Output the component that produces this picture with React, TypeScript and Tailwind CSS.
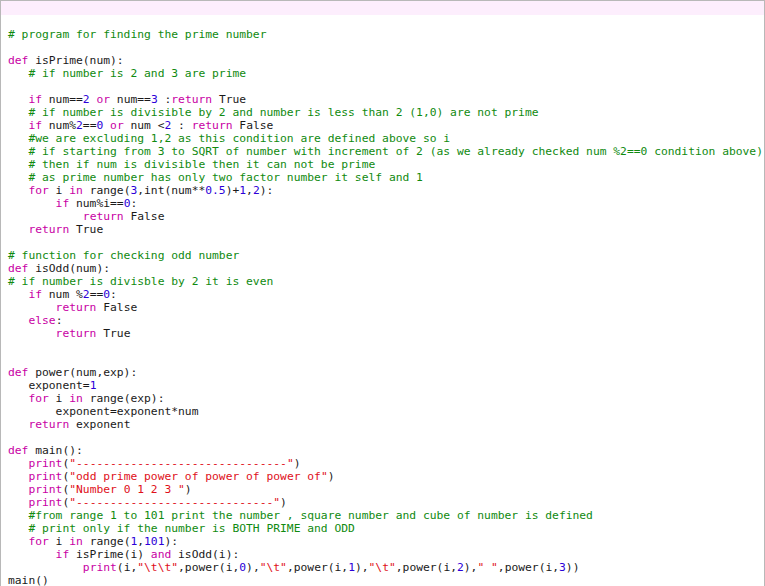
import React from "react";

type Seg = [string, string];

const K = (t: string): Seg => ["k", t];
const P = (t: string): Seg => ["p", t];
const C = (t: string): Seg => ["c", t];
const N = (t: string): Seg => ["n", t];
const S = (t: string): Seg => ["s", t];

const I1 = "   ";
const I2 = "       ";
const I3 = "           ";

const lines: Seg[][] = [
  [C("# program for finding the prime number")],
  [],
  [K("def"), P(" isPrime(num):")],
  [P(I1), C("# if number is 2 and 3 are prime")],
  [],
  [P(I1), K("if"), P(" num=="), N("2"), P(" "), K("or"), P(" num=="), N("3"), P(" :"), K("return"), P(" True")],
  [P(I1), C("# if number is divisible by 2 and number is less than 2 (1,0) are not prime")],
  [P(I1), K("if"), P(" num%"), N("2"), P("=="), N("0"), P(" "), K("or"), P(" num <"), N("2"), P(" : "), K("return"), P(" False")],
  [P(I1), C("#we are excluding 1,2 as this condition are defined above so i")],
  [P(I1), C("# if starting from 3 to SQRT of number with increment of 2 (as we already checked num %2==0 condition above)")],
  [P(I1), C("# then if num is divisible then it can not be prime")],
  [P(I1), C("# as prime number has only two factor number it self and 1")],
  [P(I1), K("for"), P(" i "), K("in"), P(" range("), N("3"), P(",int(num**"), N("0.5"), P(")+"), N("1"), P(","), N("2"), P("):")],
  [P(I2), K("if"), P(" num%i=="), N("0"), P(":")],
  [P(I3), K("return"), P(" False")],
  [P(I1), K("return"), P(" True")],
  [],
  [C("# function for checking odd number")],
  [K("def"), P(" isOdd(num):")],
  [C("# if number is divisble by 2 it is even")],
  [P(I1), K("if"), P(" num %"), N("2"), P("=="), N("0"), P(":")],
  [P(I2), K("return"), P(" False")],
  [P(I1), K("else"), P(":")],
  [P(I2), K("return"), P(" True")],
  [],
  [],
  [K("def"), P(" power(num,exp):")],
  [P(I1), P("exponent="), N("1")],
  [P(I1), K("for"), P(" i "), K("in"), P(" range(exp):")],
  [P(I2), P("exponent=exponent*num")],
  [P(I1), K("return"), P(" exponent")],
  [],
  [K("def"), P(" main():")],
  [P(I1), K("print"), P("("), S('"-------------------------------"'), P(")")],
  [P(I1), K("print"), P("("), S('"odd prime power of power of power of"'), P(")")],
  [P(I1), K("print"), P("("), S('"Number 0 1 2 3 "'), P(")")],
  [P(I1), K("print"), P("("), S('"-----------------------------"'), P(")")],
  [P(I1), C("#from range 1 to 101 print the number , square number and cube of number is defined")],
  [P(I1), C("# print only if the number is BOTH PRIME and ODD")],
  [P(I1), K("for"), P(" i "), K("in"), P(" range("), N("1"), P(","), N("101"), P("):")],
  [P(I2), K("if"), P(" isPrime(i) "), K("and"), P(" isOdd(i):")],
  [
    P(I3), K("print"), P("(i,"), S('"\\t\\t"'), P(",power(i,"), N("0"), P("),"), S('"\\t"'),
    P(",power(i,"), N("1"), P("),"), S('"\\t"'), P(",power(i,"), N("2"), P("),"), S('" "'),
    P(",power(i,"), N("3"), P("))"),
  ],
  [P("main()")],
];

function segClass(t: string): string {
  switch (t) {
    case "k":
      return "text-[#c800a4]";
    case "c":
      return "text-[#108a10]";
    case "n":
      return "text-[#2c00d8]";
    case "s":
      return "text-[#e0101a]";
    default:
      return "text-[#1a1a1a]";
  }
}

export default function App() {
  return (
    <div className="w-[765px] h-[586px] overflow-hidden bg-white border-t border-l border-r border-[#b8b8b8] flex flex-col">
      <div className="h-[14px] shrink-0 bg-[#fdeefd]" />
      <div
        className="pt-[13px] pl-[7px] whitespace-pre text-[11.3px] leading-[13px]"
        style={{ fontFamily: '"DejaVu Sans Mono", "Liberation Mono", monospace' }}
      >
        {lines.map((line, i) => (
          <div key={i} className="h-[13px]">
            {line.length === 0
              ? " "
              : line.map((seg, j) => (
                  <span key={j} className={segClass(seg[0])}>
                    {seg[1]}
                  </span>
                ))}
          </div>
        ))}
      </div>
    </div>
  );
}
